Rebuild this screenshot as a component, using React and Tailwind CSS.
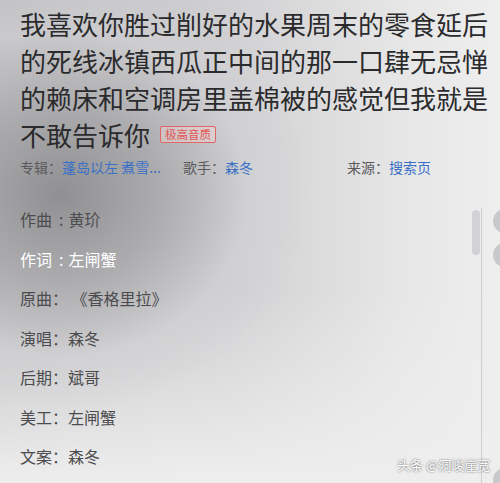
import React from "react";

const titleLines = [
  "我喜欢你胜过削好的水果周末的零食延后",
  "的死线冰镇西瓜正中间的那一口肆无忌惮",
  "的赖床和空调房里盖棉被的感觉但我就是",
];

const credits = [
  { label: "作曲", sep: "half", value: "黄玠" },
  { label: "作词", sep: "half", value: "左闸蟹", active: true },
  { label: "原曲", sep: "full", value: " 《香格里拉》" },
  { label: "演唱", sep: "full", value: "森冬" },
  { label: "后期", sep: "full", value: "斌哥" },
  { label: "美工", sep: "full", value: "左闸蟹" },
  { label: "文案", sep: "full", value: "森冬" },
];

const font = { fontFamily: '"Noto Sans CJK SC", "Noto Sans", sans-serif' };

const MetaItem = ({ label, value, width }) => (
  <div className={`flex shrink-0 ${width}`}>
    <span className="text-[#5a5a5c]">{label}：</span>
    <span className="text-[#3a70c6] whitespace-nowrap">{value}</span>
  </div>
);

const App = () => {
  return (
    <div
      className="relative w-[500px] h-[483px] overflow-hidden bg-[radial-gradient(ellipse_50%_45%_at_12%_40%,#909092_0%,#acacae_40%,rgba(208,208,210,0.6)_75%,rgba(230,230,232,0)_100%),linear-gradient(180deg,rgba(236,236,238,0)_60%,#eeeeef_100%),linear-gradient(90deg,#bfbfc1_0%,#d0d0d2_45%,#e6e6e7_80%,#eeeeef_100%)]"
      style={font}
    >
      <div className="pl-5 pt-[5px] text-[26px] leading-[37px] text-[#2b2b2d]">
        {titleLines.map((l) => (
          <div key={l} className="whitespace-nowrap">
            {l}
          </div>
        ))}
        <div className="flex items-center whitespace-nowrap">
          <span>不敢告诉你</span>
          <span className="ml-[10px] border border-[#e06565] text-[#e05555] bg-[rgba(255,220,220,0.35)] text-[11.5px] leading-[15px] px-[4px] rounded-[2px]">
            极高音质
          </span>
        </div>
      </div>

      <div className="flex pl-5 mt-[4px] text-[14px] leading-[20px]">
        <MetaItem label="专辑" value="蓬岛以左 煮雪..." width="w-[163px]" />
        <MetaItem label="歌手" value="森冬" width="w-[164px]" />
        <MetaItem label="来源" value="搜索页" width="w-[120px]" />
      </div>

      <div className="pl-5 mt-[23px] text-[16px] leading-[39.5px]">
        {credits.map((c) => (
          <div
            key={c.label}
            className={c.active ? "flex text-white whitespace-pre" : "flex text-[#4c4c4e] whitespace-pre"}
          >
            <span>{c.label}</span>
            {c.sep === "half" ? (
              <span className="ml-[7px] mr-[5px]">:</span>
            ) : (
              <span>：</span>
            )}
            <span>{c.value}</span>
          </div>
        ))}
      </div>

      {/* scrollbar + side controls */}
      <div className="absolute left-[472px] top-[210px] w-[8px] h-[45px] rounded-full bg-[#d2d2d6]" />
      <div className="absolute left-[481px] top-[208px] bottom-0 w-px bg-[#cfcfd1]" />
      <div className="absolute left-[493px] top-[209px] w-[24px] h-[24px] rounded-full bg-[#c9c9cb]" />
      <div className="absolute left-[493px] top-[243px] w-[24px] h-[24px] rounded-full bg-[#c9c9cb]" />
      <div className="absolute left-[493px] top-[468px] w-[24px] h-[24px] rounded-full bg-[#c9c9cb]" />

      <div className="absolute left-[397px] top-[455px] text-[13px] leading-[20px] text-white [text-shadow:0_0_2px_rgba(0,0,0,0.7)] whitespace-nowrap">
        头条 @洞峻崖宽
      </div>
    </div>
  );
};

export default App;
